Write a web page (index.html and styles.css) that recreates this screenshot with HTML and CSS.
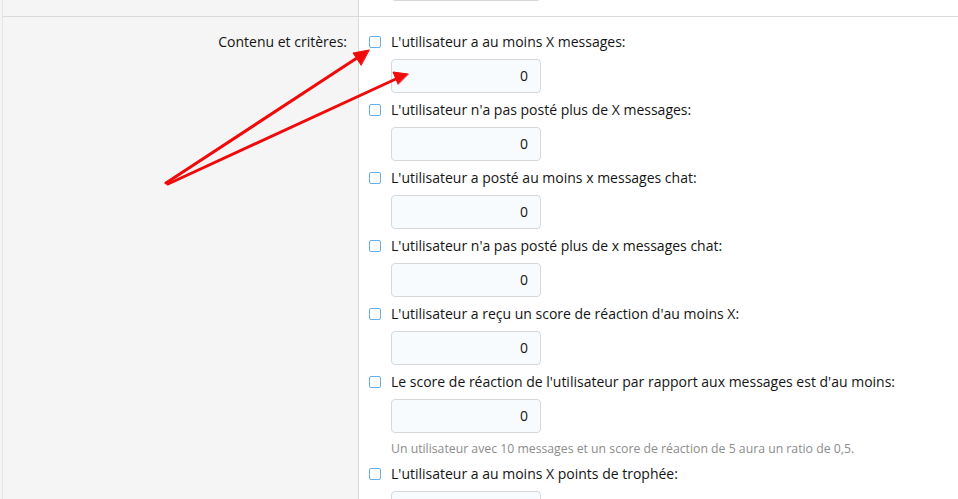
FILE: index.html
```html
<!DOCTYPE html>
<html lang="fr">
<head>
	<meta charset="UTF-8">
	<title>Critères utilisateur</title>
	<link rel="stylesheet" href="styles.css">
</head>
<body>
<div class="form">
	<!-- previous row, mostly scrolled out -->
	<div class="form-row prev-row">
		<div class="row-label"></div>
		<div class="row-input">
			<div class="num-input"></div>
		</div>
	</div>

	<div class="form-row">
		<div class="row-label">Contenu et critères:</div>
		<div class="row-input">
			<div class="crit">
				<label class="check"><span class="box"></span>L'utilisateur a au moins X messages:</label>
				<div class="num-input">0</div>
			</div>
			<div class="crit">
				<label class="check"><span class="box"></span>L'utilisateur n'a pas posté plus de X messages:</label>
				<div class="num-input">0</div>
			</div>
			<div class="crit">
				<label class="check"><span class="box"></span>L'utilisateur a posté au moins x messages chat:</label>
				<div class="num-input">0</div>
			</div>
			<div class="crit">
				<label class="check"><span class="box"></span>L'utilisateur n'a pas posté plus de x messages chat:</label>
				<div class="num-input">0</div>
			</div>
			<div class="crit">
				<label class="check"><span class="box"></span>L'utilisateur a reçu un score de réaction d'au moins X:</label>
				<div class="num-input">0</div>
			</div>
			<div class="crit">
				<label class="check"><span class="box"></span>Le score de réaction de l'utilisateur par rapport aux messages est d'au moins:</label>
				<div class="num-input">0</div>
				<div class="hint">Un utilisateur avec 10 messages et un score de réaction de 5 aura un ratio de 0,5.</div>
			</div>
			<div class="crit">
				<label class="check"><span class="box"></span>L'utilisateur a au moins X points de trophée:</label>
				<div class="num-input"></div>
			</div>
		</div>
	</div>
</div>

<!-- annotation arrows drawn over the screenshot -->
<svg class="arrows" width="958" height="499" viewBox="0 0 958 499">
	<g stroke="#f00a0a" stroke-width="3" stroke-linecap="round" fill="#f00a0a">
		<line x1="166" y1="183" x2="360" y2="56"/>
		<polygon points="369,50 353,53 361,65" stroke-width="1"/>
		<line x1="168" y1="184" x2="398" y2="78"/>
		<polygon points="408,74 393,72 398,84" stroke-width="1"/>
	</g>
</svg>
</body>
</html>
```

FILE: styles.css
```css
body {
	margin: 0;
	background: #f5f5f5;
	font-family: "Open Sans", "Noto Sans", sans-serif;
	font-size: 14px;
	color: #141414;
	overflow: hidden;
	height: 499px;
}

.form {
	margin-left: 2px;
	margin-top: -33px;
	border-left: 1px solid #e4e4e4;
}

.form-row {
	display: flex;
	border-top: 1px solid #dadada;
}

.form-row:first-child {
	border-top: none;
}

.row-label {
	width: 355px;
	flex-shrink: 0;
	box-sizing: border-box;
	padding: 16px 11px 0 0;
	text-align: right;
	line-height: 18px;
}

.row-input {
	flex: 1;
	background: #fff;
	border-left: 1px solid #dadada;
	padding: 16px 0 0 10px;
}

.prev-row .row-input {
	padding: 0 0 15px 32px;
}

.crit {
	margin-bottom: 8px;
}

.check {
	display: flex;
	align-items: center;
	line-height: 18px;
	height: 18px;
}

.box {
	width: 10px;
	height: 10px;
	border: 1.5px solid #62aeea;
	border-radius: 2px;
	background: #fff;
	margin-right: 10px;
}

.num-input {
	box-sizing: border-box;
	width: 150px;
	height: 34px;
	margin: 8px 0 0 22px;
	border: 1px solid #d8d8d8;
	border-radius: 4px;
	background: #f8fbfd;
	text-align: right;
	padding: 0 12px;
	line-height: 32px;
	font-size: 14px;
}

.prev-row .num-input {
	margin: 0;
}

.hint {
	margin: 8px 0 0 22px;
	font-size: 12.25px;
	line-height: 16px;
	color: #8c8c8c;
}

.arrows {
	position: absolute;
	left: 0;
	top: 0;
	pointer-events: none;
}
```
